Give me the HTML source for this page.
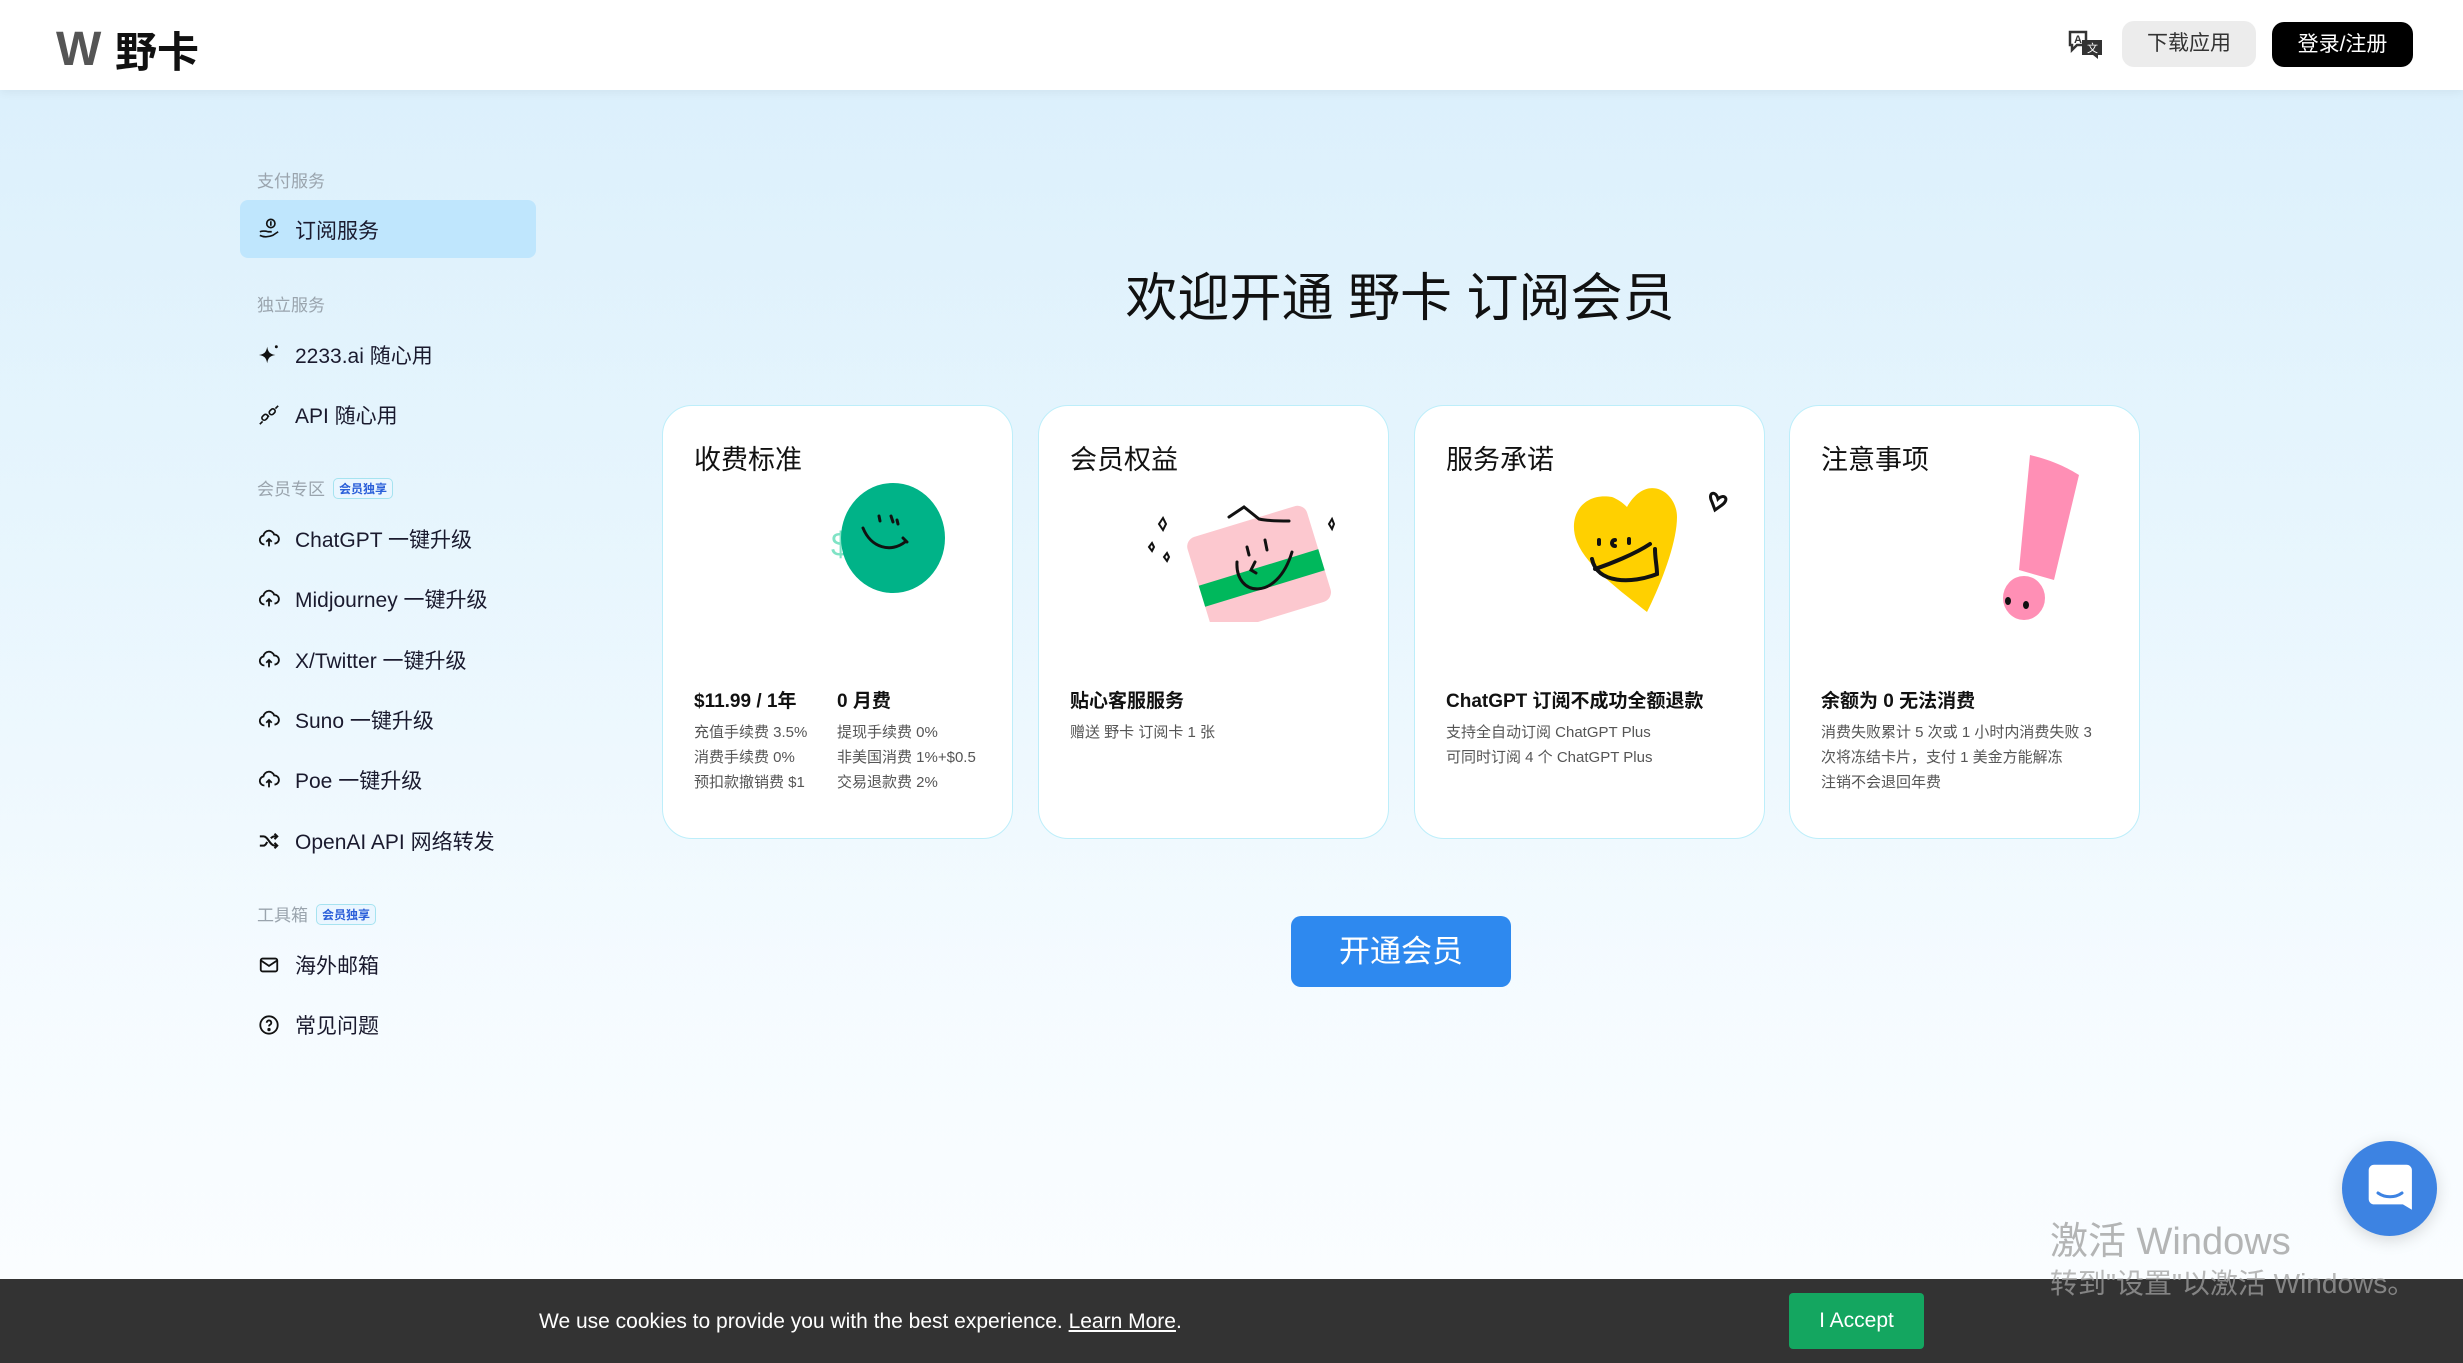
<!DOCTYPE html>
<html><head><meta charset="utf-8"><style>
*{margin:0;padding:0;box-sizing:border-box}
body{width:2463px;height:1363px;overflow:hidden;position:relative;font-family:"Liberation Sans","Noto Sans CJK SC",sans-serif;background:linear-gradient(180deg,#dcf0fc 90px,#e6f5fd 500px,#f5fbff 1000px,#fafdff 1280px);color:#111}
.a{position:absolute;white-space:nowrap}
header{position:absolute;left:0;top:0;width:2463px;height:90px;background:#fff;box-shadow:0 2px 10px rgba(0,0,0,.06)}
.lbl{position:absolute;left:257px;font-size:17px;color:#9aa4ad}
.it{position:absolute;left:295px;font-size:21px;color:#1a1a2e;transform:translateY(-50%)}
.ic{position:absolute;left:258px;width:22px;height:22px;transform:translateY(-50%)}
.tag{display:inline-block;font-size:12px;font-weight:bold;color:#2b5fd9;border:1.5px solid #a6e3f0;border-radius:5px;padding:1px 5px;margin-left:8px;vertical-align:2px;background:#eaf6ff}
.card{position:absolute;top:405px;width:351px;height:434px;background:#fff;border:1.5px solid #bdeefa;border-radius:30px}
.ct{position:absolute;left:31px;top:32px;font-size:27px;color:#111}
.cb{position:absolute;left:31px;top:280px;font-size:19px;font-weight:bold;color:#111;white-space:nowrap}
.cs{position:absolute;left:31px;top:314px;font-size:15px;line-height:25px;color:#555;white-space:nowrap}
</style></head><body>
<header>
<div class="a" style="left:56px;top:22px;font-size:48px;font-weight:900;color:#555;letter-spacing:-2px;font-family:'Liberation Sans',sans-serif">W</div>
<div class="a" style="left:115px;top:19px;font-size:42px;font-weight:bold;color:#111">野卡</div>
<svg class="a" style="left:2068px;top:30px" width="38" height="30" viewBox="0 0 38 30"><path d="M2 2h16v13h-9l-5 5v-5H2z" fill="#fff" stroke="#333" stroke-width="2.5"/><text x="6" y="13" font-size="11" font-weight="bold" fill="#333" font-family="Liberation Sans">A</text><path d="M14 10h20v15h-4v4l-5-4H14z" fill="#333"/><text x="19" y="22" font-size="11" fill="#fff" font-family="Noto Sans CJK SC">文</text></svg>
<div class="a" style="left:2122px;top:21px;width:134px;height:46px;background:#ececec;border-radius:12px;font-size:21px;color:#333;text-align:center;line-height:46px">下载应用</div>
<div class="a" style="left:2272px;top:22px;width:141px;height:45px;background:#000;border-radius:12px;font-size:21px;color:#fff;text-align:center;line-height:45px">登录/注册</div>
</header>

<div class="lbl" style="top:167px">支付服务</div>
<div class="a" style="left:240px;top:200px;width:296px;height:58px;background:#bfe6fd;border-radius:8px"></div>
<svg class="ic" style="top:229px" viewBox="0 0 24 24" fill="none" stroke="#111" stroke-width="1.8"><circle cx="14" cy="6" r="4.5"/><path d="M14 3.5v5M2 15c3-1 6-1 9 0h4M2 19c4 2 9 2 14 0l6-4M2 19"/></svg>
<div class="it" style="top:230px">订阅服务</div>
<div class="lbl" style="top:291px">独立服务</div>
<svg class="ic" style="top:355px" viewBox="0 0 24 24"><path d="M10 3c1 6 3 8 9 9-6 1-8 3-9 9-1-6-3-8-9-9 6-1 8-3 9-9z" fill="#111"/><circle cx="20" cy="3" r="1.6" fill="#111"/></svg>
<div class="it" style="top:355px">2233.ai 随心用</div>
<svg class="ic" style="top:415px" viewBox="0 0 24 24" fill="none" stroke="#111" stroke-width="1.8"><rect x="4" y="12" width="7" height="5" rx="2.5" transform="rotate(-45 7.5 14.5)"/><rect x="12" y="6" width="7" height="5" rx="2.5" transform="rotate(-45 15.5 8.5)"/><path d="M2 22l3-3M19 5l3-3M10 12l2 2"/></svg>
<div class="it" style="top:415px">API 随心用</div>
<div class="lbl" style="top:475px">会员专区<span class="tag">会员独享</span></div>
<svg width="0" height="0"><defs><symbol id="cl" viewBox="0 0 24 24"><path d="M7 18a5 5 0 0 1-1-9.9A6 6 0 0 1 17.6 7 5 5 0 0 1 18 17" fill="none" stroke="#111" stroke-width="2"/><path d="M12 20v-8M9 15l3-3 3 3" fill="none" stroke="#111" stroke-width="2"/></symbol></defs></svg>
<svg class="ic" style="top:539px"><use href="#cl"/></svg><div class="it" style="top:539px">ChatGPT 一键升级</div>
<svg class="ic" style="top:599px"><use href="#cl"/></svg><div class="it" style="top:599px">Midjourney 一键升级</div>
<svg class="ic" style="top:660px"><use href="#cl"/></svg><div class="it" style="top:660px">X/Twitter 一键升级</div>
<svg class="ic" style="top:720px"><use href="#cl"/></svg><div class="it" style="top:720px">Suno 一键升级</div>
<svg class="ic" style="top:780px"><use href="#cl"/></svg><div class="it" style="top:780px">Poe 一键升级</div>
<svg class="ic" style="top:841px" viewBox="0 0 24 24" fill="none" stroke="#111" stroke-width="2.2"><path d="M2 7h4c5 0 7 10 12 10h3M2 17h4c2 0 3-2 4-4M14 9c1-1 2-2 4-2h3M18 4l3 3-3 3M18 14l3 3-3 3"/></svg>
<div class="it" style="top:841px">OpenAI API 网络转发</div>
<div class="lbl" style="top:901px">工具箱<span class="tag">会员独享</span></div>
<svg class="ic" style="top:965px" viewBox="0 0 24 24" fill="none" stroke="#111" stroke-width="2"><rect x="3" y="5" width="18" height="14" rx="2"/><path d="M3 7l9 6 9-6"/></svg>
<div class="it" style="top:965px">海外邮箱</div>
<svg class="ic" style="top:1025px" viewBox="0 0 24 24" fill="none" stroke="#111" stroke-width="2"><circle cx="12" cy="12" r="9.5"/><path d="M9.5 9.5a2.5 2.5 0 1 1 3.5 2.3c-.7.4-1 1-1 1.7"/><circle cx="12" cy="17" r=".8" fill="#111"/></svg>
<div class="it" style="top:1025px">常见问题</div>

<div class="a" style="left:0;width:2800px;top:256px;text-align:center;font-size:52px;color:#111">欢迎开通 野卡 订阅会员</div>

<div class="card" style="left:662px">
<div class="ct">收费标准</div>
<svg class="a" style="left:158px;top:62px" width="140" height="130" viewBox="0 0 140 130"><text x="10" y="88" font-size="34" fill="#7fe3c5" font-family="Liberation Sans">$</text><text x="92" y="112" font-size="30" fill="#7fe3c5" font-family="Liberation Sans">$</text><ellipse cx="72" cy="70" rx="52" ry="55" fill="#00b388"/><path d="M42 60c8 20 28 25 42 14M82 70l4 4M58 48l1 5M70 48l2 6M76 52l1 4" fill="none" stroke="#111" stroke-width="3" stroke-linecap="round"/></svg>
<div class="cb">$11.99 / 1年</div><div class="cb" style="left:174px">0 月费</div>
<div class="cs">充值手续费 3.5%<br>消费手续费 0%<br>预扣款撤销费 $1</div>
<div class="cs" style="left:174px">提现手续费 0%<br>非美国消费 1%+$0.5<br>交易退款费 2%</div>
</div>

<div class="card" style="left:1038px">
<div class="ct">会员权益</div>
<svg class="a" style="left:100px;top:76px" width="200" height="140" viewBox="0 0 200 140"><g transform="rotate(-17 110 80)"><rect x="55" y="40" width="125" height="100" rx="10" fill="#fcc8cf"/><rect x="55" y="88" width="125" height="22" fill="#00b85c"/></g><path d="M90 35l15-10 15 12c8 2 20 2 30 2M108 65l2 8M126 58l2 10M116 80l-4 8 5 3M98 80c-2 35 40 40 55-10" fill="none" stroke="#111" stroke-width="3" stroke-linecap="round"/><path d="M20 42l4-6 3 6-3 6zM10 65l3-4 2 4-2 4zM25 75l3-4 2 4-2 4zM190 42l3-5 2 5-2 5z" fill="none" stroke="#111" stroke-width="2"/></svg>
<div class="cb">贴心客服服务</div>
<div class="cs">赠送 野卡 订阅卡 1 张</div>
</div>

<div class="card" style="left:1414px">
<div class="ct">服务承诺</div>
<svg class="a" style="left:132px;top:66px" width="190" height="170" viewBox="0 0 190 170"><path d="M65 25c-30-5-45 20-35 45 10 25 45 50 70 70 15-30 30-70 30-95 0-25-30-45-50-10-5-5-10-8-15-10z" fill="#ffd000"/><path d="M165 30c-5-10 4-12 6-3 6-6 12 0 4 6l-7 5z" fill="none" stroke="#111" stroke-width="3"/><path d="M52 68v4M68 68c-4 0-4 6 0 6M82 67v4M45 87c5 25 40 25 65 15 0-8-2-15-2-25M48 97c15-5 40-15 55-25" fill="none" stroke="#111" stroke-width="4" stroke-linecap="round"/></svg>
<div class="cb">ChatGPT 订阅不成功全额退款</div>
<div class="cs">支持全自动订阅 ChatGPT Plus<br>可同时订阅 4 个 ChatGPT Plus</div>
</div>

<div class="card" style="left:1789px">
<div class="ct">注意事项</div>
<svg class="a" style="left:184px;top:44px" width="140" height="180" viewBox="0 0 140 180"><path d="M56 5c22 5 38 13 49 20l-25 105-35-10z" fill="#ff8fb5"/><ellipse cx="50" cy="148" rx="21" ry="22" fill="#ff8fb5"/><ellipse cx="34" cy="151" rx="3" ry="4" fill="#111"/><ellipse cx="52" cy="155" rx="3" ry="4" fill="#111"/></svg>
<div class="cb">余额为 0 无法消费</div>
<div class="cs">消费失败累计 5 次或 1 小时内消费失败 3<br>次将冻结卡片，支付 1 美金方能解冻<br>注销不会退回年费</div>
</div>

<div class="a" style="left:1291px;top:916px;width:220px;height:71px;background:#2e89ef;border-radius:10px;color:#fff;font-size:31px;text-align:center;line-height:71px">开通会员</div>

<div class="a" style="left:2342px;top:1141px;width:95px;height:95px;border-radius:50%;background:#3d83e2;box-shadow:0 4px 16px rgba(0,0,0,.15)"></div>
<svg class="a" style="left:2366px;top:1163px" width="48" height="50" viewBox="0 0 48 50"><path d="M6 0h36a6 6 0 0 1 6 6v44l-10-6H6a6 6 0 0 1-6-6V6a6 6 0 0 1 6-6z" fill="#fff" transform="scale(.9) translate(3 2)"/><path d="M12 30c7 5 17 5 24 0" fill="none" stroke="#3d83e2" stroke-width="3" stroke-linecap="round"/></svg>

<div class="a" style="left:0;top:1279px;width:2463px;height:84px;background:#333"></div>
<div class="a" style="left:539px;top:1310px;font-size:21px;color:#fff">We use cookies to provide you with the best experience. <span style="text-decoration:underline">Learn More</span>.</div>
<div class="a" style="left:1789px;top:1293px;width:135px;height:56px;background:#14a660;border-radius:4px;color:#fff;font-size:21px;text-align:center;line-height:56px">I Accept</div>

<div class="a" style="left:2050px;top:1210px;font-size:38px;color:rgba(150,150,150,.7);font-family:'Liberation Sans','Noto Sans CJK SC',sans-serif">激活 Windows</div>
<div class="a" style="left:2050px;top:1262px;font-size:28px;color:rgba(160,160,160,.75)">转到"设置"以激活 Windows。</div>
</body></html>
